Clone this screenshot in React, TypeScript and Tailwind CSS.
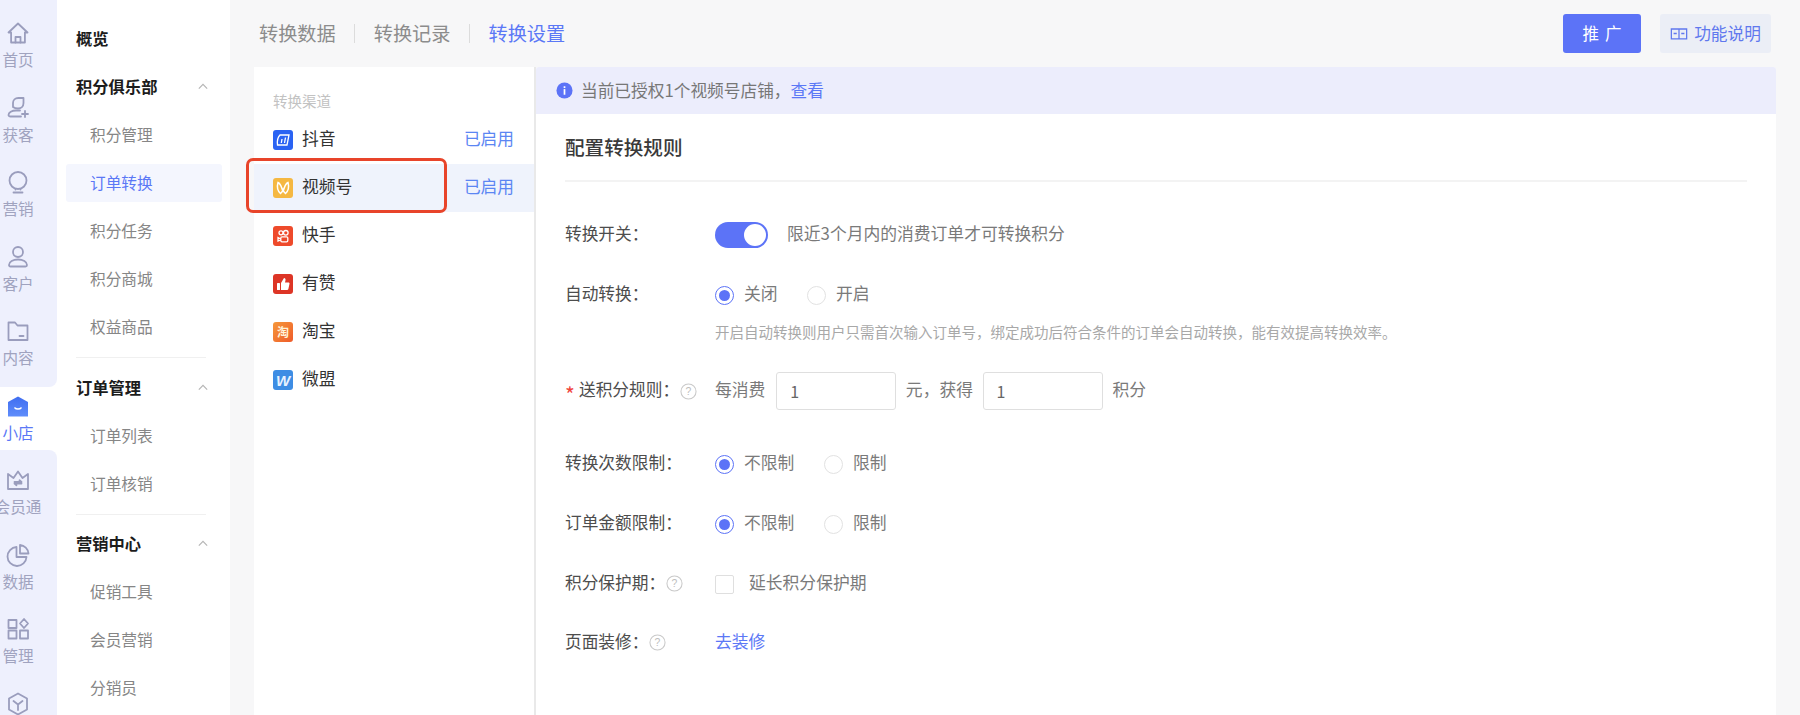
import React from "react";

const FONT = { fontFamily: '"Noto Sans CJK SC", "Noto Sans", sans-serif' };

function Svg({ children, className = "w-6 h-6" }: { children: React.ReactNode; className?: string }) {
  return (
    <svg viewBox="0 0 24 24" fill="none" stroke="#9a9dbd" strokeWidth="1.800" strokeLinecap="round" strokeLinejoin="round" className={className}>
      {children}
    </svg>
  );
}

const railTop: [string, React.ReactNode][] = [
  ["首页", <><path d="M12 2.500 2.500 11.500h2.600V21.500h13.800V11.500h2.600z" /><path d="M9.500 21.500v-5.500h5v5.500" /></>],
  ["获客", <><path d="M7 11V7c0-3 2.300-5 5.200-5h5.300v5c0 3.500-2.500 5.500-5.500 5.500-2 0-3.600-.4-5-1.500z" /><path d="M15 20.500H4.500C3.400 20.500 2.500 19.800 2.500 19c0-2.400 3.500-4.500 7.500-4.500h4" /><path d="M19 15v6M16 18h6" /></>],
  ["营销", <><circle cx="12" cy="10.500" r="8.500" /><path d="M9.500 19v.6M14.500 19v.6" /><path d="M7.500 22.500h9" /></>],
  ["客户", <><circle cx="12" cy="7" r="5" /><path d="M3 20c0-3.300 4-5.500 9-5.500s9 2.200 9 5.500c0 1-.6 1.500-1.500 1.500h-15C3.600 21.500 3 21 3 20z" /></>],
  ["内容", <><path d="M2.500 21V3.500h6.500l2.500 3h10V21z" /><path d="M13.500 17h4" /></>],
];

const railBottom: [string, React.ReactNode][] = [
  ["会员通", <><path d="M2 6l5.500 4L12 3.500 16.500 10 22 6v15H2z" /><path d="M8.500 14h7l-2-1.700M15.500 15.500h-7l2 1.700" /></>],
  ["数据", <><path d="M10.500 4a9.500 9.500 0 1 0 10 10H10.500z" /><path d="M14 2v8.500h8.500A9.500 9.500 0 0 0 14 2z" /></>],
  ["管理", <><rect x="2.500" y="3" width="8" height="8" /><rect x="2.500" y="13.500" width="8" height="8" /><rect x="14" y="13.500" width="8" height="8" /><path d="M18 2l4 4.500-4 4.500-4-4.500z" /></>],
  ["", <><path d="M12 1.500 21 6.500v11L12 22.500 3 17.500v-11z" /><path d="M7.500 9 12 12.500 16.500 9M12 12.500V18" /></>],
];

function RailItem({ label, icon }: { label: string; icon: React.ReactNode }) {
  return (
    <div className="h-[74.5px] w-9 pt-[13px] flex flex-col items-center shrink-0">
      <Svg>{icon}</Svg>
      <div className="mt-[4px] h-5 leading-5 text-[15.600px] text-[#a0a3bf] whitespace-nowrap">{label}</div>
    </div>
  );
}

function Rail() {
  return (
    <div className="w-[57px] h-full flex flex-col shrink-0 bg-white">
      <div className="h-[387px] bg-[#eef0fd] rounded-br-lg pt-2 overflow-hidden">
        {railTop.map(([l, i]) => (
          <RailItem key={l} label={l} icon={i} />
        ))}
      </div>
      <div className="h-[63px] w-9 pt-2 flex flex-col items-center">
        <svg viewBox="0 0 24 24" className="w-6 h-6">
          <defs>
            <linearGradient id="shop" x1="0" y1="0" x2="0" y2="1">
              <stop offset="0" stopColor="#3f6df0" />
              <stop offset="1" stopColor="#5f8dfb" />
            </linearGradient>
          </defs>
          <path d="M12 1.500 22 7v14.500H2V7z" fill="url(#shop)" />
          <path d="M9 13c1 1.400 5 1.400 6 0" fill="none" stroke="#fff" strokeWidth="1.600" strokeLinecap="round" />
        </svg>
        <div className="mt-[3px] h-5 leading-5 text-[15.600px] text-[#5b78f6] whitespace-nowrap">小店</div>
      </div>
      <div className="flex-1 bg-[#eef0fd] rounded-tr-lg pt-[5px] overflow-hidden">
        {railBottom.map(([l, i], k) => (
          <RailItem key={k} label={l} icon={i} />
        ))}
      </div>
    </div>
  );
}

function Chevron() {
  return (
    <svg viewBox="0 0 12 8" className="w-[10px] h-[7px]" fill="none" stroke="#b5b5b5" strokeWidth="1.400">
      <path d="M1 6.500 6 1.500l5 5" />
    </svg>
  );
}

function Head({ text, chevron = true }: { text: string; chevron?: boolean }) {
  return (
    <div className={`h-12 flex items-center justify-between pr-[22px] pl-[10px] text-[16.300px] font-bold text-[#1c1c1c] ${chevron ? "pb-[2px]" : ""}`}>
      <span>{text}</span>
      {chevron && <Chevron />}
    </div>
  );
}

function SubItem({ text, active }: { text: string; active?: boolean }) {
  return (
    <div className="h-12 flex items-center">
      <div className={`w-[156px] h-[38px] flex items-center pl-6 rounded-[3px] text-[15.700px] ${active ? "bg-[#f4f6fe] text-[#5b78f6]" : "text-[#868686]"}`}>
        {text}
      </div>
    </div>
  );
}

function SubNav() {
  return (
    <div className="w-[173px] h-full bg-white pl-[9px] pt-[14px] shrink-0 overflow-hidden">
      <Head text="概览" chevron={false} />
      <div className="h-px" />
      <Head text="积分俱乐部" />
      {["积分管理", "订单转换", "积分任务", "积分商城", "权益商品"].map((t) => (
        <SubItem key={t} text={t} active={t === "订单转换"} />
      ))}
      <div className="ml-[10px] w-[130px] h-px bg-[#f0f0f0] my-[6px]" />
      <Head text="订单管理" />
      <SubItem text="订单列表" />
      <SubItem text="订单核销" />
      <div className="ml-[10px] w-[130px] h-px bg-[#f0f0f0] my-[5.500px]" />
      <Head text="营销中心" />
      <SubItem text="促销工具" />
      <SubItem text="会员营销" />
      <SubItem text="分销员" />
    </div>
  );
}

function TopBar() {
  return (
    <div className="h-[67px] flex items-start pl-[29px] pr-[29px] shrink-0">
      <div className="h-[66px] flex items-center text-[19.200px] text-[#8c8c8c]">
        <span>转换数据</span>
        <div className="w-px h-[19px] bg-[#dcdcdc] mx-[18.500px]" />
        <span>转换记录</span>
        <div className="w-px h-[19px] bg-[#dcdcdc] mx-[18.500px]" />
        <span className="text-[#5b78f6]">转换设置</span>
      </div>
      <div className="ml-auto mt-[14px] flex gap-[19px]">
        <button className="w-[78px] h-[39px] rounded-[3px] bg-[#5c73f7] text-white text-[16.500px] flex items-center justify-center tracking-[6px] pl-[6px]">推广</button>
        <button className="w-[111px] h-[39px] rounded-[3px] bg-[#ebeef6] text-[#6078ee] text-[16.700px] flex items-center justify-center gap-[6px]">
          <svg viewBox="0 0 20 16" className="w-[18px] h-[15px]" fill="none" stroke="#6078ee" strokeWidth="1.400">
            <path d="M10 3H1.500v11H10zM10 3h8.500v11H10z" />
            <path d="M4 8h3.500M12.500 8H16" />
          </svg>
          功能说明
        </button>
      </div>
    </div>
  );
}

function Logo({ bg, children }: { bg: string; children: React.ReactNode }) {
  return (
    <div className={`w-5 h-5 rounded-[3px] flex items-center justify-center shrink-0 ${bg}`}>
      {children}
    </div>
  );
}

const channels: [string, React.ReactNode][] = [
  ["抖音", <Logo bg="bg-[#2a63f3]"><svg viewBox="0 0 20 20" className="w-5 h-5" fill="none" stroke="#fff" strokeWidth="1.300"><path d="M7 5h9l-2 10H4.500C4 11 5 7 7 5z" /><path d="M9 9 8.300 13M12.500 7.500 11.500 13" /></svg></Logo>],
  ["视频号", <Logo bg="bg-[#f5b842]"><svg viewBox="0 0 20 20" className="w-5 h-5" fill="none" stroke="#fff" strokeWidth="1.500"><path d="M5 4.500c2.500 1 4 5.500 5 9.500 1-4 2.500-8.500 5-9.500 1.200 4.500.3 8.500-2.500 11-1-1-1.800-2-2.500-3.500-.7 1.500-1.500 2.500-2.500 3.500C4.700 13 3.800 9 5 4.500z" /></svg></Logo>],
  ["快手", <Logo bg="bg-[#ee4a2b]"><svg viewBox="0 0 20 20" className="w-5 h-5" fill="none" stroke="#fff" strokeWidth="1.300"><circle cx="8" cy="6.800" r="2" /><circle cx="12.800" cy="6.800" r="2.300" /><rect x="7.800" y="10.800" width="7" height="5" rx="1.200" /><path d="M7.800 13 5 11.500v3.500L7.800 14" /></svg></Logo>],
  ["有赞", <Logo bg="bg-[#dd3526]"><svg viewBox="0 0 20 20" className="w-5 h-5" fill="#fff"><rect x="4" y="9" width="3" height="7" rx=".6" /><path d="M8 9l3-5c1.200 0 1.800 1 1.500 2.200L12 8.500h3.500c.7 0 1.200.6 1 1.300l-1.200 5.400c-.2.500-.6.800-1.100.8H8z" /></svg></Logo>],
  ["淘宝", <Logo bg="bg-gradient-to-br from-[#f5973a] to-[#ee5a2a]"><span className="text-[12px] leading-none font-bold text-[#fff3d8]">淘</span></Logo>],
  ["微盟", <Logo bg="bg-[#3e8de4]"><span className="text-[15px] leading-none font-bold italic text-[#e8f2ff]" style={{ fontFamily: '"Liberation Sans", sans-serif' }}>W</span></Logo>],
];

function Channels() {
  return (
    <div className="w-[282px] h-full bg-white border-r-2 border-[#e9e9e9] pt-6 shrink-0">
      <div className="pl-[19px] h-5 leading-5 text-[14.500px] text-[#c2c2c2] mb-[5px]">转换渠道</div>
      {channels.map(([name, logo], i) => (
        <div key={name} className={`relative h-12 flex items-center pl-[19px] pr-5 ${i === 1 ? "bg-[#eff3fc]" : ""}`}>
          {logo}
          <span className="ml-[9px] pb-[2px] text-[16.800px] text-[#333]">{name}</span>
          {i < 2 && <span className="ml-auto pb-[2px] text-[16.700px] text-[#5b86f3]">已启用</span>}
          {i === 1 && <div className="absolute -left-2 -top-[6px] w-[201px] h-[55px] border-[3px] border-[#e8442a] rounded-[7px]" />}
        </div>
      ))}
    </div>
  );
}

function Row({ label, className = "", star, help, children, h = "h-10" }: { label: string; className?: string; star?: boolean; help?: boolean; children: React.ReactNode; h?: string }) {
  return (
    <div className={`flex items-center ${h} ${className}`}>
      <div className="w-[150px] shrink-0 flex items-center text-[16.700px] text-[#4d4d4d]">
        {star && <span className="text-[#f0443c] w-[14px] text-[21px] leading-none pt-[7px]">*</span>}
        <span className="pb-[2px]">{label}：</span>
        {help && <Help />}
      </div>
      {children}
    </div>
  );
}

function Help() {
  return (
    <svg viewBox="0 0 18 18" className="w-[17px] h-[17px] ml-px">
      <circle cx="9" cy="9" r="8" fill="none" stroke="#c9c9c9" strokeWidth="1.100" />
      <text x="9" y="13" textAnchor="middle" fontSize="11" fill="#bdbdbd" fontFamily="Liberation Sans, sans-serif">?</text>
    </svg>
  );
}

function Radio({ on, label, width }: { on?: boolean; label: string; width: string }) {
  return (
    <div className={`flex items-center ${width}`}>
      <div className={`w-[19px] h-[19px] rounded-full border flex items-center justify-center shrink-0 ${on ? "border-[#5c73f7]" : "border-[#e2e2e2]"}`}>
        {on && <div className="w-[11px] h-[11px] rounded-full bg-[#5c73f7]" />}
      </div>
      <span className="ml-[10px] pb-[2px] text-[16.800px] text-[#7a7a7a]">{label}</span>
    </div>
  );
}

function NumInput() {
  return (
    <div className="w-[120px] h-[38px] border border-[#dfdfdf] rounded-[3px] flex items-center pl-[13px] text-[16px] text-[#666]">1</div>
  );
}

function Form() {
  return (
    <div className="flex-1 h-full bg-white rounded-t-[3px]">
      <div className="h-[47px] bg-[#ecedfc] rounded-t-[3px] flex items-center pl-5 text-[16.700px] text-[#777]">
        <svg viewBox="0 0 18 18" className="w-[17px] h-[17px] mr-2">
          <circle cx="9" cy="9" r="8.500" fill="#5c73f7" />
          <rect x="8.100" y="7.500" width="1.800" height="6" fill="#fff" />
          <rect x="8.100" y="4.500" width="1.800" height="1.900" fill="#fff" />
        </svg>
        <span>当前已授权1个视频号店铺，</span>
        <span className="text-[#5b78f6]">查看</span>
      </div>
      <div className="mx-[29px] h-[68px] border-b-2 border-[#f3f3f3] flex items-center text-[19.600px] font-medium text-[#3a3a3a]">配置转换规则</div>
      <div className="pl-[29px]">
        <Row label="转换开关" className="mt-[33px]">
          <div className="w-[53px] h-[26px] rounded-full bg-[#5c73f7] relative shrink-0">
            <div className="absolute right-[2px] top-[2px] w-[22px] h-[22px] rounded-full bg-white" />
          </div>
          <span className="ml-[19px] pb-[2px] text-[16.800px] text-[#7a7a7a]">限近3个月内的消费订单才可转换积分</span>
        </Row>
        <Row label="自动转换" className="mt-5">
          <Radio on label="关闭" width="w-[92px]" />
          <Radio label="开启" width="w-[92px]" />
        </Row>
        <div className="ml-[150px] mt-[7px] h-5 leading-5 text-[14.500px] text-[#a8a8a8]">开启自动转换则用户只需首次输入订单号，绑定成功后符合条件的订单会自动转换，能有效提高转换效率。</div>
        <Row label="送积分规则" star help className="mt-[30px]" h="h-[38px]">
          <span className="text-[16.800px] text-[#7a7a7a] mr-[11px] pb-[2px]">每消费</span>
          <NumInput />
          <span className="text-[16.800px] text-[#7a7a7a] mx-[9.500px] pb-[2px]">元，获得</span>
          <NumInput />
          <span className="text-[16.800px] text-[#7a7a7a] ml-[10px] pb-[2px]">积分</span>
        </Row>
        <Row label="转换次数限制" className="mt-[34px]">
          <Radio on label="不限制" width="w-[109px]" />
          <Radio label="限制" width="w-[92px]" />
        </Row>
        <Row label="订单金额限制" className="mt-5">
          <Radio on label="不限制" width="w-[109px]" />
          <Radio label="限制" width="w-[92px]" />
        </Row>
        <Row label="积分保护期" help className="mt-5">
          <div className="w-[19px] h-[19px] border border-[#dfdfdf] rounded-[2px]" />
          <span className="ml-[15px] pb-[2px] text-[16.800px] text-[#7a7a7a]">延长积分保护期</span>
        </Row>
        <Row label="页面装修" help className="mt-[19px]">
          <span className="pb-[2px] text-[16.800px] text-[#5b78f6]">去装修</span>
        </Row>
      </div>
    </div>
  );
}

export default function App() {
  return (
    <div className="w-[1800px] h-[715px] flex overflow-hidden bg-[#f7f7f8]" style={FONT}>
      <Rail />
      <SubNav />
      <div className="flex-1 flex flex-col min-w-0">
        <TopBar />
        <div className="flex-1 flex ml-6 mr-6 min-h-0">
          <Channels />
          <Form />
        </div>
      </div>
    </div>
  );
}
